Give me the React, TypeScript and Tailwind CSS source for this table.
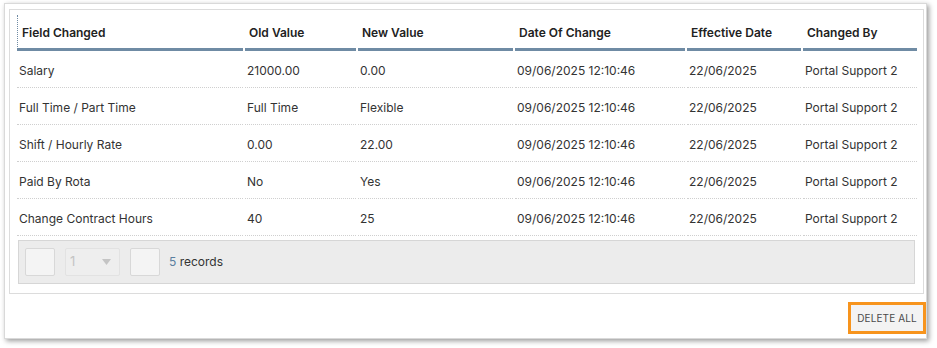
import React from "react";

const rows = [
  ["Salary", "21000.00", "0.00", "09/06/2025 12:10:46", "22/06/2025", "Portal Support 2"],
  ["Full Time / Part Time", "Full Time", "Flexible", "09/06/2025 12:10:46", "22/06/2025", "Portal Support 2"],
  ["Shift / Hourly Rate", "0.00", "22.00", "09/06/2025 12:10:46", "22/06/2025", "Portal Support 2"],
  ["Paid By Rota", "No", "Yes", "09/06/2025 12:10:46", "22/06/2025", "Portal Support 2"],
  ["Change Contract Hours", "40", "25", "09/06/2025 12:10:46", "22/06/2025", "Portal Support 2"],
];

const headers = [
  { label: "Field Changed", w: "w-[226px]" },
  { label: "Old Value", w: "w-[111px]" },
  { label: "New Value", w: "w-[155px]" },
  { label: "Date Of Change", w: "w-[170px]" },
  { label: "Effective Date", w: "w-[114px]" },
  { label: "Changed By", w: "w-[114px]" },
];

export default function App() {
  return (
    <div
      className="w-[937px] h-[348px] bg-white pl-[4px] pt-[3px]"
      style={{ fontFamily: "Inter, 'Liberation Sans', sans-serif" }}
    >
      <div className="w-[923px] h-[336px] border border-[#d9d9d9] bg-white shadow-[2px_2px_5px_rgba(0,0,0,0.4)] flex flex-col">
        <div className="ml-[4px] mt-[5px] w-[915px] border border-[#dcdcdc] pt-[5px] pb-[9px] pl-[7px]">
          <table className="w-[900px] border-separate border-spacing-x-[2px] border-spacing-y-0 -mx-[2px] table-fixed">
            <thead>
              <tr>
                {headers.map((h, i) => (
                  <th
                    key={h.label}
                    className={`${h.w} text-left font-semibold text-[12px] leading-[16px] text-[#222] pt-[10px] pb-[7px] pl-[4px] border-b-[3px] border-b-[#6f8ba4] ${
                      i === 0 ? "border-l border-l-[#6f8ba4]" : ""
                    }`}
                    style={i === 0 ? { borderLeftStyle: "dotted", borderBottomStyle: "solid" } : undefined}
                  >
                    {h.label}
                  </th>
                ))}
              </tr>
            </thead>
            <tbody>
              {rows.map((r, ri) => (
                <tr key={ri}>
                  {r.map((c, ci) => (
                    <td
                      key={ci}
                      className="text-[12px] leading-[16px] text-[#333] pt-[12px] pb-[8px] pl-[2px] border-b border-dotted border-b-[#cfcfcf] whitespace-nowrap"
                    >
                      {c}
                    </td>
                  ))}
                </tr>
              ))}
            </tbody>
          </table>
          <div className="mt-[4px] ml-[1px] w-[897px] h-[44px] bg-[#ececec] border border-[#d6d6d6] flex items-center pl-[6px]">
            <div className="w-[30px] h-[28px] bg-[#f4f4f4] border border-[#d8d8d8] rounded-[2px]" />
            <div className="ml-[10px] w-[55px] h-[28px] bg-[#eeeeee] border border-[#e2e2e2] rounded-[2px] flex items-center justify-between pl-[4px] pr-[8px] text-[13px] text-[#c4c4c4]">
              <span>1</span>
              <svg width="9" height="6" viewBox="0 0 9 6">
                <path d="M0 0 L9 0 L4.5 6 Z" fill="#c4c4c4" />
              </svg>
            </div>
            <div className="ml-[10px] w-[30px] h-[28px] bg-[#f4f4f4] border border-[#d8d8d8] rounded-[2px]" />
            <span className="ml-[9px] text-[12px] text-[#333]">
              <span className="text-[#5b7fa0]">5</span> records
            </span>
          </div>
        </div>
        <div className="flex justify-end mt-[8px]">
          <button className="w-[78px] h-[32px] border-[3px] border-[#f7941d] bg-[#f3f3f3] text-[10px] text-[#4a4a4a] tracking-[0.1px] flex items-center justify-center">
            DELETE ALL
          </button>
        </div>
      </div>
    </div>
  );
}
